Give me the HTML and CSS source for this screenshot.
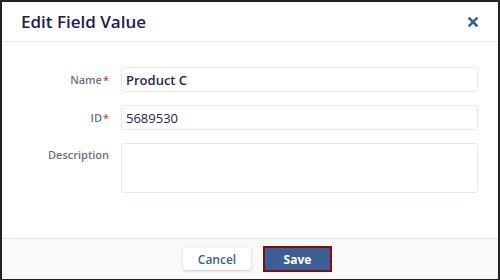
FILE: index.html
```html
<!DOCTYPE html>
<html lang="en">
  <head>
    <meta charset="UTF-8" />
    <meta name="viewport" content="width=device-width, initial-scale=1.0" />
    <title>Edit Field Value</title>
    <link rel="stylesheet" href="styles.css">
  </head>
  <body>
    <div class="dialog">
      <div class="dialog-header">
        <h2>Edit Field Value</h2>
        <button class="close" aria-label="Close">
          <svg width="10" height="10" viewBox="0 0 10 10">
            <path d="M1.5 1.5 L8.5 8.5 M8.5 1.5 L1.5 8.5" stroke="#3a5f95" stroke-width="2.6" stroke-linecap="square" />
          </svg>
        </button>
      </div>

      <div class="dialog-body">
        <label class="field-label">Name<span class="req">*</span></label>
        <input class="field-input strong" type="text" value="Product C" />

        <label class="field-label">ID<span class="req">*</span></label>
        <input class="field-input" type="text" value="5689530" />

        <label class="field-label top">Description</label>
        <textarea class="field-input area"></textarea>
      </div>

      <div class="dialog-footer">
        <button class="btn cancel">Cancel</button>
        <button class="btn save">Save</button>
      </div>
    </div>
  </body>
</html>
```

FILE: styles.css
```css
body {
  margin: 0;
  font-family: "Open Sans", "Noto Sans", sans-serif;
  background: white;
}
.dialog {
  width: 500px;
  height: 280px;
  box-sizing: border-box;
  border: 2px solid #222;
  border-bottom-width: 1px;
  display: flex;
  flex-direction: column;
  background: white;
}
.dialog-header {
  height: 39px;
  border-bottom: 1px solid #e3e6ee;
  display: flex;
  align-items: center;
  justify-content: space-between;
  padding: 0 20px 0 19px;
}
.dialog-header h2 {
  margin: 0;
  font-size: 17px;
  font-weight: 600;
  color: #221c50;
}
.close {
  border: none;
  background: none;
  padding: 0;
  width: 10px;
  height: 10px;
  display: flex;
  cursor: pointer;
}
.dialog-body {
  flex: 1;
  display: grid;
  grid-template-columns: 107px 1fr;
  column-gap: 12px;
  row-gap: 13px;
  align-content: start;
  align-items: center;
  padding: 25px 20px 0 0;
}
.field-label {
  text-align: right;
  font-size: 11px;
  font-weight: 600;
  color: #6b7383;
}
.field-label.top {
  align-self: start;
  padding-top: 4px;
}
.req {
  color: #d9453b;
  margin-left: 1px;
}
.field-input {
  box-sizing: border-box;
  height: 25px;
  border: 1px solid #dfeaf6;
  border-radius: 3px;
  padding: 0 4px;
  font-family: inherit;
  font-size: 13px;
  color: #2a2550;
  outline: none;
}
.field-input.strong {
  font-weight: 600;
}
.field-input.area {
  height: 50px;
  resize: none;
}
.dialog-footer {
  height: 40px;
  border-top: 1px solid #d9e8f5;
  background: #f9f9f9;
  display: flex;
  align-items: center;
  justify-content: center;
  gap: 12px;
  padding-left: 15px;
}
.btn {
  font-family: inherit;
  font-size: 12px;
  font-weight: 600;
  cursor: pointer;
  border-radius: 3px;
}
.cancel {
  width: 68px;
  height: 22px;
  background: white;
  color: #3a5f95;
  border: none;
  box-shadow: 0 1px 3px rgba(0, 0, 0, 0.18);
}
.save {
  width: 69px;
  height: 26px;
  background: #3c5f93;
  color: white;
  font-weight: 700;
  border: 2px solid #8b0a0a;
  border-radius: 0;
}
```
